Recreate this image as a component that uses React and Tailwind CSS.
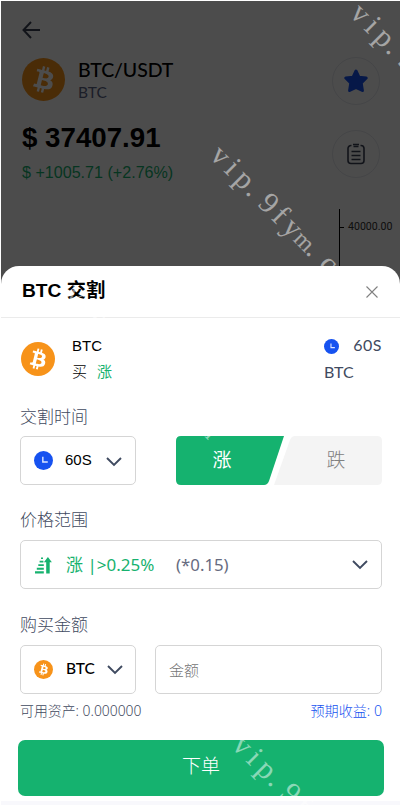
import React from 'react';

const SANS = "font-['Liberation_Sans','Noto_Sans_CJK_SC',sans-serif]";
const NOTO = "font-['Noto_Sans','Noto_Sans_CJK_SC',sans-serif]";
const ROUND = "font-['Lato','Noto_Sans_CJK_SC',sans-serif]";

const BitcoinIcon = ({ className }) => (
  <svg viewBox="0 0 32 32" className={className}>
    <circle cx="16" cy="16" r="16" fill="#f7931a" />
    <path
      fill="#fff"
      d="M23.189 14.02c.314-2.096-1.283-3.223-3.465-3.975l.708-2.84-1.728-.43-.69 2.765c-.454-.114-.92-.22-1.385-.326l.695-2.783L15.596 6l-.708 2.839c-.376-.086-.746-.17-1.104-.26l.002-.009-2.384-.595-.46 1.846s1.283.294 1.256.312c.7.175.826.638.805 1.006l-.806 3.235c.048.012.11.03.18.057l-.183-.045-1.13 4.532c-.086.212-.303.531-.793.41.018.025-1.256-.313-1.256-.313l-.858 1.978 2.25.561c.418.105.828.215 1.231.318l-.715 2.872 1.727.43.708-2.84c.472.127.93.245 1.378.357l-.706 2.828 1.728.43.715-2.866c2.948.558 5.164.333 6.097-2.333.752-2.146-.037-3.385-1.588-4.192 1.13-.26 1.98-1.003 2.207-2.538zm-3.95 5.538c-.533 2.147-4.148.986-5.32.695l.95-3.805c1.172.293 4.929.872 4.37 3.11zm.535-5.569c-.487 1.953-3.495.96-4.47.717l.86-3.45c.975.243 4.118.696 3.61 2.733z"
    />
  </svg>
);

const ClockIcon = ({ className }) => (
  <svg viewBox="0 0 20 20" className={className}>
    <circle cx="10" cy="10" r="10" fill="#1652f0" />
    <path d="M9.300 6v5.500h5.200" fill="none" stroke="#dbe5ff" strokeWidth="1.500" />
  </svg>
);

const ChevronIcon = ({ className }) => (
  <svg viewBox="0 0 16 10" className={className}>
    <path d="M1 1l7 7 7-7" fill="none" stroke="#3f4a60" strokeWidth="1.900" />
  </svg>
);

const RiseIcon = ({ className }) => (
  <svg viewBox="0 0 18 18" className={className} fill="#17b26f">
    <path d="M0 15.200h8.800v2.300H0zM1.800 11.700h7v2H1.800zM3.300 8.200h5.500v1.700H3.300zM4.600 4.800h3.800v1.600H4.600zM6 1.600h2v1.400H6z" />
    <path d="M11.200 17.500V6.200H8.900l4-5.200 4 5.200h-2.200v11.300z" />
  </svg>
);

/* Site watermark, tiled diagonally above everything */
const Watermark = ({ className }) => (
  <svg
    viewBox="0 0 220 40"
    className={`pointer-events-none absolute h-[40px] w-[220px] origin-top-left rotate-45 overflow-visible ${className}`}
  >
    <text
      x="1 21 35 52 69 88 103 119 137 155 171 187"
      y="24"
      fill="#fff"
      fillOpacity="0.5"
      fontSize="30"
      className="font-['Liberation_Serif',serif]"
    >
      vip.9fy<tspan fontSize="24">m</tspan>.co<tspan fontSize="24">m</tspan>
    </text>
  </svg>
);

const MarketHeader = () => (
  <div className="relative h-[290px] pl-[21px] pr-5 pt-5">
    <svg viewBox="0 0 18 18" className="h-[18px] w-[18px]" fill="none" stroke="#3a4255" strokeWidth="2">
      <path d="M9 1L1.500 9L9 17M1.500 9H18" />
    </svg>
    <div className="mt-[17px] flex h-[50px] items-start justify-between">
      <div className="flex">
        <BitcoinIcon className="mt-[2px] h-[43px] w-[43px]" />
        <div className={`ml-[13px] ${ROUND}`}>
          <div className="mt-[2px] text-[19.500px] font-medium leading-[24px] tracking-[-0.1px] text-black">BTC/USDT</div>
          <div className="text-[15.500px] leading-[21px] text-[#5d6588]">BTC</div>
        </div>
      </div>
      <div className="mt-px flex h-12 w-12 items-center justify-center rounded-full border border-[#e6e8ee]">
        <svg viewBox="0 0 24 24" className="h-[24px] w-[24px]" fill="#1652f0" stroke="#1652f0" strokeWidth="3" strokeLinejoin="round">
          <path d="M12 2l2.900 6.200 7.300.8-5 5 1.200 7.500-6.400-3.200-6.400 3.200L6.800 14l-5-5 7.300-.8z" />
        </svg>
      </div>
    </div>
    <div className="flex justify-between">
      <div className={SANS}>
        <div className="mt-[15px] text-[27.700px] font-bold leading-[34px] text-black">$ 37407.91</div>
        <div className="mt-[7px] text-[16.100px] leading-[20px] text-[#17b26f]">$ +1005.71 (+2.76%)</div>
      </div>
      <div className="mt-6 flex h-12 w-12 items-center justify-center rounded-full border border-[#e6e8ee]">
        <svg viewBox="0 0 18 22" className="h-[22px] w-[18px]" fill="none" stroke="#3a4255" strokeWidth="1.600">
          <path d="M4.500 2.500H4A3 3 0 0 0 1 5.500v12a3 3 0 0 0 3 3h10a3 3 0 0 0 3-3v-12a3 3 0 0 0-3-3h-.5M4.500 8.500h9M4.500 12.500h9M4.500 16.500h9" />
          <path d="M6 1.500h6M6.500 3.500h5" strokeWidth="1.300" />
        </svg>
      </div>
    </div>
    {/* Price axis */}
    <div className="absolute left-[338px] top-[208px] h-[60px] border-l border-black">
      <div className="mt-[11px] flex items-center font-['Roboto',sans-serif] text-[10.600px] leading-[14px] text-[#333]">
        <span className="mr-[4px] h-px w-[4px] bg-black" />
        40000.00
      </div>
    </div>
  </div>
);

const OrderSheet = () => (
  <div className="absolute inset-x-0 bottom-0 top-[265px] rounded-t-[18px] bg-white">
    <div className="flex h-[52px] items-center justify-between border-b border-[#ebebeb] pl-[21px] pr-[22px]">
      <h2 className={`text-[19.200px] font-bold text-black ${SANS}`}>BTC 交割</h2>
      <svg viewBox="0 0 12 12" className="h-[12px] w-[12px]" stroke="#808080" strokeWidth="1.100">
        <path d="M.5.5l11 11M11.500.5l-11 11" />
      </svg>
    </div>

    <div className="pl-[19px] pr-[18px]">
      <div className="flex h-[86px] items-start pt-[15px]">
        <BitcoinIcon className="ml-px mt-[9px] h-[34px] w-[34px]" />
        <div className={`ml-[17px] text-[15px] leading-[26px] text-black ${SANS}`}>
          <div>BTC</div>
          <div className="font-light">
            买<span className="ml-[10px] font-normal text-[#17b26f]">涨</span>
          </div>
        </div>
        <div className={`ml-auto w-[58px] text-[16px] leading-[27px] text-[#3f4a60] ${ROUND}`}>
          <div className="-mt-[2px] flex items-center justify-between">
            <ClockIcon className="mt-[4px] h-[15px] w-[15px]" />
            <span className="tracking-[0.500px]">60S</span>
          </div>
          <div>BTC</div>
        </div>
      </div>

      <div className={`h-[32px] text-[17px] font-light leading-[25px] text-[#3f4a60] ${NOTO}`}>交割时间</div>
      <div className="flex justify-between">
        <button className="flex h-[49px] w-[116px] items-center rounded-[5px] border border-[#d5d5d5] pl-[13px]">
          <ClockIcon className="h-[19px] w-[19px]" />
          <span className={`ml-[12px] w-[41px] text-left text-[15px] text-black ${SANS}`}>60S</span>
          <ChevronIcon className="mt-[2px] h-[10px] w-[16px]" />
        </button>
        <div className={`relative h-[49px] w-[206px] text-[19px] font-light ${NOTO}`}>
          <svg viewBox="0 0 206 49" className="absolute inset-0 h-[49px] w-[206px]">
            <path d="M5 0h103L93 45q-1.500 4-5 4H5q-5 0-5-5V5q0-5 5-5z" fill="#15b26f" />
            <path d="M119 0h82q5 0 5 5v39q0 5-5 5H98l16-45q1.500-4 5-4z" fill="#f4f4f4" />
          </svg>
          <div className="relative flex h-full items-center">
            <span className="w-[92px] text-center font-normal text-white">涨</span>
            <span className="w-[114px] pl-[22px] text-center text-[#808080]">跌</span>
          </div>
        </div>
      </div>

      <div className={`mt-[22px] h-[33px] text-[17px] font-light leading-[25px] text-[#3f4a60] ${NOTO}`}>价格范围</div>
      <button className={`flex h-[49px] w-full items-center rounded-[5px] border border-[#d5d5d5] pl-[14px] pr-[13px] text-[17px] ${NOTO}`}>
        <RiseIcon className="h-[18px] w-[18px]" />
        <span className="ml-[13px] w-[110px] whitespace-nowrap text-left text-[#17b26f]">涨 |&gt;0.25%</span>
        <span className="text-[16.800px] text-[#666b80]">(*0.15)</span>
        <ChevronIcon className="ml-auto h-[10px] w-[16px]" />
      </button>

      <div className={`mt-[23px] h-[33px] text-[17px] font-light leading-[25px] text-[#3f4a60] ${NOTO}`}>购买金额</div>
      <div className="flex justify-between">
        <button className="flex h-[49px] w-[116px] items-center rounded-[5px] border border-[#d5d5d5] pl-[13px]">
          <BitcoinIcon className="h-[19px] w-[19px]" />
          <span className={`ml-[13px] w-[41px] pb-px text-left text-[15.500px] font-medium text-black ${ROUND}`}>BTC</span>
          <ChevronIcon className="h-[10px] w-[16px]" />
        </button>
        <input
          placeholder="金额"
          className={`h-[49px] w-[227px] rounded-[5px] border border-[#d5d5d5] px-[13px] text-[15px] font-light placeholder:text-[#757575] ${NOTO}`}
        />
      </div>
      <div className={`flex h-[46px] justify-between pt-[7px] text-[13.900px] font-light leading-[20px] text-[#3f4a60] ${NOTO}`}>
        <span>可用资产: 0.000000</span>
        <span className="text-[14.100px] text-[#1652f0]">预期收益: 0</span>
      </div>
    </div>
    <button className={`mx-[17px] flex h-[56px] w-[366px] items-center justify-center rounded-[7px] bg-[#15b26f] pb-[4px] text-[19px] font-light text-white ${NOTO}`}>
      下单
    </button>
    <div className="mt-[5px] h-[4px] bg-[#f8f8fc]" />
  </div>
);

export default function App() {
  return (
    <div className="h-[805px] w-[400px] overflow-hidden bg-white pl-px pt-px">
      <div className="relative h-[804px] overflow-hidden bg-white">
        <MarketHeader />
        <div className="absolute inset-x-0 top-0 h-[290px] bg-black/70" />
        <OrderSheet />
        <Watermark className="left-[364px] top-[-4px]" />
        <Watermark className="left-[224px] top-[138px]" />
        <Watermark className="left-[79px] top-[277px]" />
        <Watermark className="left-[246px] top-[728px]" />
      </div>
    </div>
  );
}
